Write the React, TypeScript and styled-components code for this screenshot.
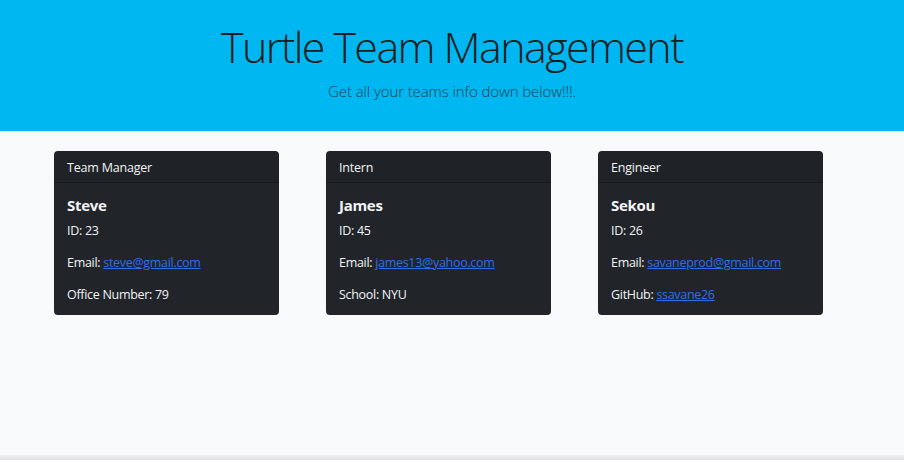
import React from "react";
import styled, { createGlobalStyle } from "styled-components";

const GlobalStyle = createGlobalStyle`
  html, body {
    margin: 0;
    padding: 0;
    background: #f8f9fa;
    font-family: "Open Sans", "Noto Sans", Arial, sans-serif;
  }
`;

const Page = styled.div`
  height: 460px;
  display: flex;
  flex-direction: column;
  overflow: hidden;
`;

const Jumbotron = styled.header`
  height: 131px;
  background: #00b7f1;
  display: flex;
  flex-direction: column;
  align-items: center;
  padding-top: 19px;
  box-sizing: border-box;
`;

const Title = styled.h1`
  margin: 0;
  font-size: 43px;
  font-weight: 300;
  line-height: 56px;
  color: #1a1d21;
  letter-spacing: -1.6px;
`;

const Lead = styled.p`
  margin: 6px 0 0;
  font-size: 15px;
  font-weight: 300;
  color: #18404f;
  letter-spacing: -0.1px;
`;

const CardRow = styled.main`
  flex: 1;
  display: flex;
  align-items: flex-start;
  gap: 47px;
  padding: 20px 0 0 54px;
`;

const Card = styled.section`
  width: 225px;
  background: #212529;
  border-radius: 4px;
  color: #f1f3f5;
  overflow: hidden;
`;

const CardHeader = styled.div`
  height: 32px;
  box-sizing: border-box;
  padding: 1px 13px 0;
  display: flex;
  align-items: center;
  font-size: 12.5px;
  letter-spacing: -0.2px;
  background: rgba(0, 0, 0, 0.06);
  border-bottom: 1px solid rgba(0, 0, 0, 0.25);
`;

const CardBody = styled.div`
  padding: 12px 13px 11px;
`;

const Name = styled.h5`
  margin: 0 0 6px;
  font-size: 15px;
  font-weight: 700;
  line-height: 20px;
  letter-spacing: -0.3px;
`;

const Info = styled.p`
  margin: 0 0 13px;
  font-size: 12.5px;
  line-height: 19px;
  letter-spacing: -0.3px;

  &:last-child {
    margin-bottom: 0;
  }
`;

const Link = styled.a`
  color: #2d6fea;
  text-decoration: underline;
`;

const BottomEdge = styled.div`
  height: 5px;
  background: linear-gradient(#eef0f2, #dfe2e5);
`;

type Member = {
  role: string;
  name: string;
  id: number;
  email: string;
  extraLabel: string;
  extra: string;
  extraLink?: boolean;
};

const team: Member[] = [
  { role: "Team Manager", name: "Steve", id: 23, email: "steve@gmail.com", extraLabel: "Office Number", extra: "79" },
  { role: "Intern", name: "James", id: 45, email: "james13@yahoo.com", extraLabel: "School", extra: "NYU" },
  { role: "Engineer", name: "Sekou", id: 26, email: "savaneprod@gmail.com", extraLabel: "GitHub", extra: "ssavane26", extraLink: true },
];

export default function App() {
  return (
    <Page>
      <GlobalStyle />
      <Jumbotron>
        <Title>Turtle Team Management</Title>
        <Lead>Get all your teams info down below!!!.</Lead>
      </Jumbotron>
      <CardRow>
        {team.map((m) => (
          <Card key={m.name}>
            <CardHeader>{m.role}</CardHeader>
            <CardBody>
              <Name>{m.name}</Name>
              <Info>ID: {m.id}</Info>
              <Info>
                Email: <Link href={`mailto:${m.email}`}>{m.email}</Link>
              </Info>
              <Info>
                {m.extraLabel}:{" "}
                {m.extraLink ? <Link href="#">{m.extra}</Link> : m.extra}
              </Info>
            </CardBody>
          </Card>
        ))}
      </CardRow>
      <BottomEdge />
    </Page>
  );
}
